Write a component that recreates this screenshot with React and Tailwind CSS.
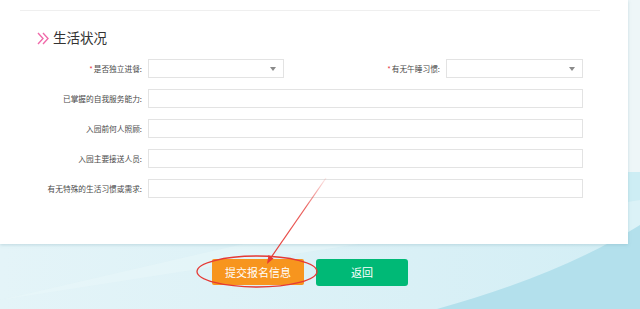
import React from "react";

const font = { fontFamily: '"Microsoft YaHei", "Noto Sans CJK SC", sans-serif' };

function Arrow() {
  return (
    <span className="absolute right-[7px] top-1/2 -translate-y-1/2 w-0 h-0 border-l-[3px] border-r-[3px] border-t-[4px] border-l-transparent border-r-transparent border-t-[#8a8a8a]" />
  );
}

function Label({ w, req, children }) {
  return (
    <div className={`${w} shrink-0 text-right text-[7.7px] leading-none text-[#4a4a4a] whitespace-nowrap`}>
      {req && <span className="text-[#e4393c] mr-[1px]">*</span>}
      {children}:
    </div>
  );
}

function Box({ w, select }) {
  return (
    <div className={`${w} h-[19px] ml-[6px] relative border border-[#e3e3e3] bg-white shrink-0`}>
      {select && <Arrow />}
    </div>
  );
}

export default function App() {
  return (
    <div className="relative w-[640px] h-[309px] overflow-hidden bg-[#e2f3f7]" style={font}>
      {/* background decoration */}
      <svg className="absolute inset-0" width="640" height="309" viewBox="0 0 640 309">
        <defs>
          <linearGradient id="bg" x1="0" y1="0" x2="1" y2="0">
            <stop offset="0" stopColor="#e4f4f8" />
            <stop offset="1" stopColor="#d3eef5" />
          </linearGradient>
        </defs>
        <rect width="640" height="309" fill="url(#bg)" />
        <rect x="600" y="0" width="40" height="172" fill="#eef6f8" />
        <rect x="600" y="172" width="40" height="70" fill="#cdedf4" />
        <path d="M0 300 L260 240 L640 245 L640 200 Z" fill="#eaf7fa" opacity="0.5" />
        <path d="M437 309 Q560 275 640 225 L640 309 Z" fill="#b3e0ec" />
      </svg>

      <div className="relative flex flex-col">
        {/* card */}
        <div className="w-[628px] h-[244px] bg-white shadow-[0_1px_3px_rgba(120,170,180,0.35)] flex flex-col">
          <div className="ml-[20px] mt-[10px] w-[580px] h-px bg-[#efefef]" />
          <div className="ml-[37px] mt-[19px] h-[16px] flex items-center gap-[2px]">
            <svg width="14" height="13" viewBox="0 0 14 13">
              <path d="M1 1 L6 6.5 L1 12" fill="none" stroke="#f06aaa" strokeWidth="1.4" />
              <path d="M6 1 L11 6.5 L6 12" fill="none" stroke="#f06aaa" strokeWidth="1.4" />
            </svg>
            <span className="text-[13.5px] leading-none text-[#333]">生活状况</span>
          </div>

          <div className="mt-[13px] flex flex-col gap-[11px]">
            <div className="flex items-center">
              <Label w="w-[142px]" req>是否独立进餐</Label>
              <Box w="w-[136px]" select />
              <Label w="w-[156px]" req>有无午睡习惯</Label>
              <Box w="w-[137px]" select />
            </div>
            <div className="flex items-center">
              <Label w="w-[142px]">已掌握的自我服务能力</Label>
              <Box w="w-[435px]" />
            </div>
            <div className="flex items-center">
              <Label w="w-[142px]">入园前何人照顾</Label>
              <Box w="w-[435px]" />
            </div>
            <div className="flex items-center">
              <Label w="w-[142px]">入园主要接送人员</Label>
              <Box w="w-[435px]" />
            </div>
            <div className="flex items-center">
              <Label w="w-[142px]">有无特殊的生活习惯或需求</Label>
              <Box w="w-[435px]" />
            </div>
          </div>
        </div>

        {/* buttons */}
        <div className="ml-[212px] mt-[15px] flex items-start gap-[12px]">
          <button className="w-[92px] h-[26px] bg-[#f7951e] text-white text-[11px] leading-none rounded-[2px]">
            提交报名信息
          </button>
          <button className="w-[92px] h-[27px] bg-[#00b976] text-white text-[11px] leading-none rounded-[3px]">
            返回
          </button>
        </div>
      </div>

      {/* red annotation */}
      <svg className="absolute inset-0 pointer-events-none" width="640" height="309" viewBox="0 0 640 309">
        <defs>
          <linearGradient id="ln" x1="326" y1="178" x2="268" y2="262" gradientUnits="userSpaceOnUse">
            <stop offset="0" stopColor="#e53935" stopOpacity="0.1" />
            <stop offset="0.35" stopColor="#e53935" stopOpacity="0.8" />
            <stop offset="1" stopColor="#e53935" stopOpacity="1" />
          </linearGradient>
        </defs>
        <line x1="326" y1="178" x2="270" y2="259" stroke="url(#ln)" strokeWidth="1.2" />
        <path d="M267 264 L268.5 255 L273.5 258.5 Z" fill="#e53935" />
        <ellipse cx="257" cy="271.5" rx="60" ry="15.5" fill="none" stroke="#e53935" strokeWidth="1.3" />
      </svg>
    </div>
  );
}
